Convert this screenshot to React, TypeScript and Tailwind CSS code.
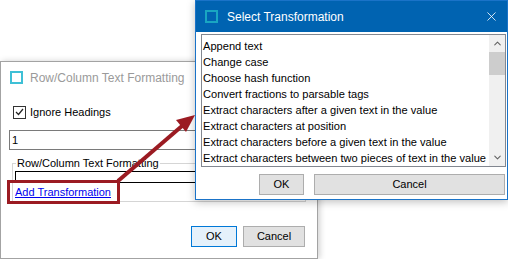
import { ChevronDown, ChevronUp, X } from "lucide-react";

const font = "font-['Liberation_Sans',Arial,sans-serif]";

const ITEMS = [
  "Append text",
  "Change case",
  "Choose hash function",
  "Convert fractions to parsable tags",
  "Extract characters after a given text in the value",
  "Extract characters at position",
  "Extract characters before a given text in the value",
  "Extract characters between two pieces of text in the value",
];

function AppIcon({ className }: { className?: string }) {
  return <span className={`block h-[13px] w-[13px] border-2 ${className ?? ""}`} />;
}

function FormattingWindow() {
  return (
    <div className="absolute left-0 top-[61px] flex h-[198px] w-[318px] flex-col border border-[#a3a3a3] bg-white shadow-[2px_0_6px_rgba(0,0,0,0.18)]">
      <div className="flex h-[29px] items-center gap-[7px] pl-[9px] pt-[2px]">
        <AppIcon className="border-[#3fc0d6]" />
        <span className="text-[12px] leading-[14px] text-[#9a9a9a]">Row/Column Text Formatting</span>
      </div>

      <label className="mt-[14px] flex items-center gap-[4px] pl-[12px] leading-[14px]">
        <span className="flex h-[13px] w-[13px] items-center justify-center border border-[#333] bg-white">
          <svg width="9" height="8" viewBox="0 0 9 8">
            <path d="M1 4 L3.5 6.5 L8 1" fill="none" stroke="#222" strokeWidth="1.2" />
          </svg>
        </span>
        <span className="text-[11px] text-black">Ignore Headings</span>
      </label>

      <div className="ml-[8px] mt-[11px] flex h-[20px] w-[300px] items-center border border-[#7a7a7a] pl-[2px] text-[11px] leading-[14px] text-black">
        1
      </div>

      <fieldset className="mx-[11px] mt-[6px] h-[46px] border border-[#d5d5d5] px-[2px] pb-[2px]">
        <legend className="ml-[1px] px-[1px] text-[11px] leading-[14px] text-black">
          Row/Column Text Formatting
        </legend>
        <div className="mt-[1px] h-[12px] border border-black" />
        <a href="#" className="mt-[2px] block text-[11px] leading-[15px] text-[#0000ee] underline">
          Add Transformation
        </a>
      </fieldset>

      <div className="mt-auto mb-[11px] flex justify-end gap-[6px] pr-[12px]">
        <button className="h-[21px] w-[46px] border border-[#0078d7] bg-[#e5f1fb] text-[11px] text-black">
          OK
        </button>
        <button className="h-[21px] w-[62px] border border-[#adadad] bg-[#e1e1e1] text-[11px] text-black">
          Cancel
        </button>
      </div>
    </div>
  );
}

function SelectWindow() {
  return (
    <div className="absolute left-[195px] top-0 flex h-[200px] w-[313px] flex-col border border-[#1a73c8] bg-white shadow-[0_2px_8px_rgba(0,0,0,0.25)]">
      <div className="flex h-[31px] items-center bg-[#0063b1] pl-[9px] pr-[8px]">
        <AppIcon className="border-[#19a6c2]" />
        <span className="ml-[9px] text-[12px] text-white">Select Transformation</span>
        <X className="ml-auto text-white" size={15} strokeWidth={1.3} />
      </div>

      <div className="ml-[5px] mt-[2px] flex h-[133px] w-[305px] border border-[#828790]">
        <ul className="min-w-0 flex-1 overflow-hidden pt-[3px] pl-[1px]">
          {ITEMS.map((item) => (
            <li key={item} className="h-[16px] whitespace-nowrap text-[11.1px] leading-[16px] text-black">
              {item}
            </li>
          ))}
        </ul>
        <div className="flex w-[16px] shrink-0 flex-col bg-[#f0f0f0]">
          <div className="flex h-[17px] items-center justify-center">
            <ChevronUp size={11} strokeWidth={2.2} className="text-[#606060]" />
          </div>
          <div className="h-[23px] bg-[#cdcdcd]" />
          <div className="mt-auto flex h-[17px] items-center justify-center">
            <ChevronDown size={11} strokeWidth={2.2} className="text-[#606060]" />
          </div>
        </div>
      </div>

      <div className="mt-[7px] flex gap-[10px] pl-[63px]">
        <button className="h-[21px] w-[45px] border border-[#adadad] bg-[#e1e1e1] text-[11px] text-black">
          OK
        </button>
        <button className="h-[21px] w-[191px] border border-[#adadad] bg-[#e1e1e1] text-[11px] text-black">
          Cancel
        </button>
      </div>
    </div>
  );
}

export default function App() {
  return (
    <div className={`relative h-[259px] w-[508px] overflow-hidden bg-white ${font}`}>
      <FormattingWindow />
      <SelectWindow />

      {/* callout: box round the link and arrow into the dialog */}
      <div className="absolute left-[7px] top-[180px] h-[24px] w-[113px] border-[3px] border-[#9b1b22]" />
      <svg className="absolute left-0 top-0" width="508" height="259">
        <line x1="118" y1="181" x2="182" y2="126" stroke="#9b1b22" strokeWidth="4" />
        <polygon points="195,115 176,120 186,132" fill="#9b1b22" />
      </svg>
    </div>
  );
}
